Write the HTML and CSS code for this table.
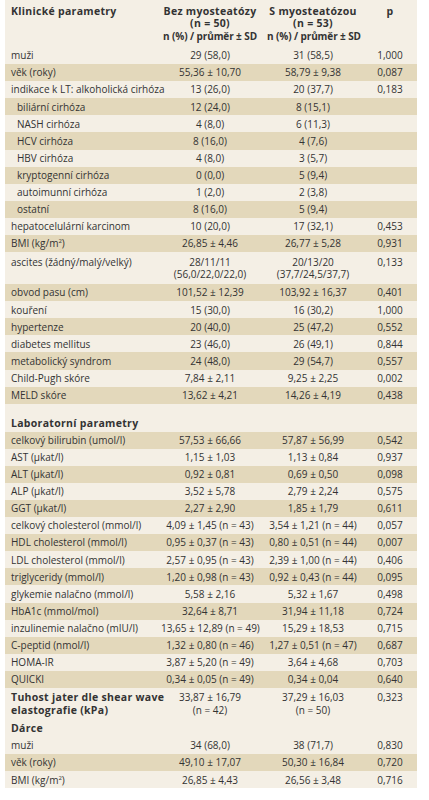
FILE: index.html
```html
<!DOCTYPE html>
<html lang="cs">
<head>
    <meta charset="UTF-8">
    <meta name="viewport" content="width=device-width, initial-scale=1">
    <title>Klinické parametry</title>
    <link rel="stylesheet" href="styles.css">
</head>
<body>
    <table class="params">
        <colgroup>
            <col class="c-label">
            <col class="c-a">
            <col class="c-b">
            <col class="c-p">
        </colgroup>
        <thead>
            <tr>
                <th class="label">Klinické parametry</th>
                <th>Bez myosteatózy<br>(n = 50)<br><span class="unit">n (%) / průměr ± SD</span></th>
                <th>S myosteatózou<br>(n = 53)<br><span class="unit">n (%) / průměr ± SD</span></th>
                <th>p</th>
            </tr>
        </thead>
        <tbody>
            <tr><td class="label">muži</td><td>29 (58,0)</td><td>31 (58,5)</td><td>1,000</td></tr>
            <tr class="alt"><td class="label">věk (roky)</td><td>55,36 ± 10,70</td><td>58,79 ± 9,38</td><td>0,087</td></tr>
            <tr><td class="label">indikace k LT: alkoholická cirhóza</td><td>13 (26,0)</td><td>20 (37,7)</td><td>0,183</td></tr>
            <tr class="alt"><td class="label sub">biliární cirhóza</td><td>12 (24,0)</td><td>8 (15,1)</td><td></td></tr>
            <tr><td class="label sub">NASH cirhóza</td><td>4 (8,0)</td><td>6 (11,3)</td><td></td></tr>
            <tr class="alt"><td class="label sub">HCV cirhóza</td><td>8 (16,0)</td><td>4 (7,6)</td><td></td></tr>
            <tr><td class="label sub">HBV cirhóza</td><td>4 (8,0)</td><td>3 (5,7)</td><td></td></tr>
            <tr class="alt"><td class="label sub">kryptogenní cirhóza</td><td>0 (0,0)</td><td>5 (9,4)</td><td></td></tr>
            <tr><td class="label sub">autoimunní cirhóza</td><td>1 (2,0)</td><td>2 (3,8)</td><td></td></tr>
            <tr class="alt"><td class="label sub">ostatní</td><td>8 (16,0)</td><td>5 (9,4)</td><td></td></tr>
            <tr><td class="label">hepatocelulární karcinom</td><td>10 (20,0)</td><td>17 (32,1)</td><td>0,453</td></tr>
            <tr class="alt"><td class="label">BMI (kg/m<sup>2</sup>)</td><td>26,85 ± 4,46</td><td>26,77 ± 5,28</td><td>0,931</td></tr>
            <tr class="tall"><td class="label">ascites (žádný/malý/velký)</td><td>28/11/11<br>(56,0/22,0/22,0)</td><td>20/13/20<br>(37,7/24,5/37,7)</td><td>0,133</td></tr>
            <tr class="alt"><td class="label">obvod pasu (cm)</td><td>101,52 ± 12,39</td><td>103,92 ± 16,37</td><td>0,401</td></tr>
            <tr><td class="label">kouření</td><td>15 (30,0)</td><td>16 (30,2)</td><td>1,000</td></tr>
            <tr class="alt"><td class="label">hypertenze</td><td>20 (40,0)</td><td>25 (47,2)</td><td>0,552</td></tr>
            <tr><td class="label">diabetes mellitus</td><td>23 (46,0)</td><td>26 (49,1)</td><td>0,844</td></tr>
            <tr class="alt"><td class="label">metabolický syndrom</td><td>24 (48,0)</td><td>29 (54,7)</td><td>0,557</td></tr>
            <tr><td class="label">Child-Pugh skóre</td><td>7,84 ± 2,11</td><td>9,25 ± 2,25</td><td>0,002</td></tr>
            <tr class="alt"><td class="label">MELD skóre</td><td>13,62 ± 4,21</td><td>14,26 ± 4,19</td><td>0,438</td></tr>

            <tr class="section"><td class="label bold">Laboratorní parametry</td><td></td><td></td><td></td></tr>
            <tr class="alt"><td class="label">celkový bilirubin (umol/l)</td><td>57,53 ± 66,66</td><td>57,87 ± 56,99</td><td>0,542</td></tr>
            <tr><td class="label">AST (µkat/l)</td><td>1,15 ± 1,03</td><td>1,13 ± 0,84</td><td>0,937</td></tr>
            <tr class="alt"><td class="label">ALT (µkat/l)</td><td>0,92 ± 0,81</td><td>0,69 ± 0,50</td><td>0,098</td></tr>
            <tr><td class="label">ALP (µkat/l)</td><td>3,52 ± 5,78</td><td>2,79 ± 2,24</td><td>0,575</td></tr>
            <tr class="alt"><td class="label">GGT (µkat/l)</td><td>2,27 ± 2,90</td><td>1,85 ± 1,79</td><td>0,611</td></tr>
            <tr><td class="label">celkový cholesterol (mmol/l)</td><td>4,09 ± 1,45 (n = 43)</td><td>3,54 ± 1,21 (n = 44)</td><td>0,057</td></tr>
            <tr class="alt"><td class="label">HDL cholesterol (mmol/l)</td><td>0,95 ± 0,37 (n = 43)</td><td>0,80 ± 0,51 (n = 44)</td><td>0,007</td></tr>
            <tr><td class="label">LDL cholesterol (mmol/l)</td><td>2,57 ± 0,95 (n = 43)</td><td>2,39 ± 1,00 (n = 44)</td><td>0,406</td></tr>
            <tr class="alt"><td class="label">triglyceridy (mmol/l)</td><td>1,20 ± 0,98 (n = 43)</td><td>0,92 ± 0,43 (n = 44)</td><td>0,095</td></tr>
            <tr><td class="label">glykemie nalačno (mmol/l)</td><td>5,58 ± 2,16</td><td>5,32 ± 1,67</td><td>0,498</td></tr>
            <tr class="alt"><td class="label">HbA1c (mmol/mol)</td><td>32,64 ± 8,71</td><td>31,94 ± 11,18</td><td>0,724</td></tr>
            <tr><td class="label">inzulinemie nalačno (mIU/l)</td><td>13,65 ± 12,89 (n = 49)</td><td>15,29 ± 18,53</td><td>0,715</td></tr>
            <tr class="alt"><td class="label">C-peptid (nmol/l)</td><td>1,32 ± 0,80 (n = 46)</td><td>1,27 ± 0,51 (n = 47)</td><td>0,687</td></tr>
            <tr><td class="label">HOMA-IR</td><td>3,87 ± 5,20 (n = 49)</td><td>3,64 ± 4,68</td><td>0,703</td></tr>
            <tr class="alt"><td class="label">QUICKI</td><td>0,34 ± 0,05 (n = 49)</td><td>0,34 ± 0,04</td><td>0,640</td></tr>
            <tr class="tall"><td class="label bold">Tuhost jater dle shear wave<br>elastografie (kPa)</td><td>33,87 ± 16,79<br>(n = 42)</td><td>37,29 ± 16,03<br>(n = 50)</td><td>0,323</td></tr>

            <tr><td class="label bold">Dárce</td><td></td><td></td><td></td></tr>
            <tr><td class="label">muži</td><td>34 (68,0)</td><td>38 (71,7)</td><td>0,830</td></tr>
            <tr class="alt"><td class="label">věk (roky)</td><td>49,10 ± 17,07</td><td>50,30 ± 16,84</td><td>0,720</td></tr>
            <tr><td class="label">BMI (kg/m<sup>2</sup>)</td><td>26,85 ± 4,43</td><td>26,56 ± 3,48</td><td>0,716</td></tr>
        </tbody>
    </table>
</body>
</html>
```

FILE: styles.css
```css
body {
    margin: 0;
    background: #fff;
    font-family: "Open Sans", "Noto Sans", sans-serif;
    font-size: 10px;
    color: #333;
}

.params {
    width: 412px;
    margin-left: 5px;
    border-collapse: collapse;
    table-layout: fixed;
    background: #f4efe5;
}

.c-label { width: 152px; }
.c-a { width: 106px; }
.c-b { width: 100px; }
.c-p { width: 54px; }

th, td {
    padding: 2.3px 4px;
    line-height: 12.5px;
    text-align: center;
    vertical-align: top;
    white-space: nowrap;
}

th {
    padding-top: 4.8px;
    padding-bottom: 4.7px;
    font-size: 10.5px;
    font-weight: 700;
    letter-spacing: 0.3px;
}

th .unit {
    font-size: 10px;
    letter-spacing: -0.1px;
}

.label {
    text-align: left;
    padding-left: 6px;
}

.sub {
    padding-left: 12px;
}

.bold {
    font-size: 10.5px;
    font-weight: 700;
    letter-spacing: 0.3px;
}

.alt {
    background: #e3d8bb;
}

.tall td {
    padding-top: 3.5px;
    padding-bottom: 3.5px;
}

.section td {
    padding-top: 13px;
}

sup {
    font-size: 6px;
    line-height: 0;
    vertical-align: 4px;
}
```
